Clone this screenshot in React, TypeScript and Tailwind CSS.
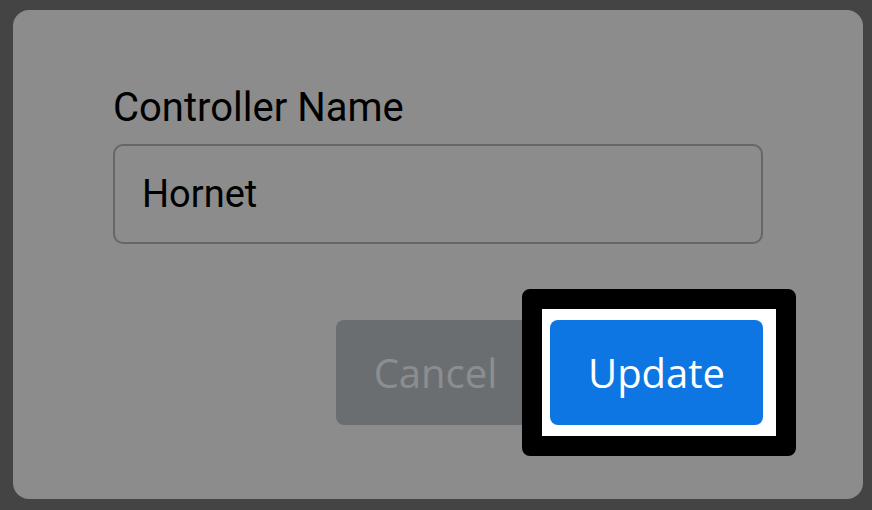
import { useState } from "react";

export default function App() {
  const [name, setName] = useState("Hornet");

  return (
    <div className="min-h-screen bg-[#444444] pl-[13px] pr-[9px] pt-[10px] pb-[11px]">
      <div className="rounded-2xl bg-[#8c8c8c] px-[100px] pt-[74px] pb-[74px]">
        <label
          htmlFor="controller-name"
          className="block text-[40px] leading-[48px] text-black"
          style={{ fontFamily: "Roboto, 'Liberation Sans', sans-serif" }}
        >
          Controller Name
        </label>
        <input
          id="controller-name"
          value={name}
          onChange={(e) => setName(e.target.value)}
          className="mt-[12px] block h-[100px] w-full rounded-[10px] border-2 border-[#666666] bg-transparent pl-[27px] text-[38px] text-black outline-none"
          style={{ fontFamily: "Roboto, 'Liberation Sans', sans-serif" }}
        />

        <div
          className="mt-[76px] flex justify-end gap-[15px]"
          style={{ fontFamily: "'Open Sans', 'Noto Sans', sans-serif" }}
        >
          <button className="h-[105px] w-[199px] rounded-[8px] bg-[#6b6e70] text-[40px] text-[#8b8e90]">
            Cancel
          </button>
          <div className="relative">
            {/* focus highlight around the primary action */}
            <span className="absolute -left-[28px] -right-[33px] -top-[31px] -bottom-[31px] rounded-[8px] border-[20px] border-black bg-white" />
            <button className="relative h-[105px] w-[213px] rounded-[8px] bg-[#0e76e2] text-[40px] text-white">
              Update
            </button>
          </div>
        </div>
      </div>
    </div>
  );
}
